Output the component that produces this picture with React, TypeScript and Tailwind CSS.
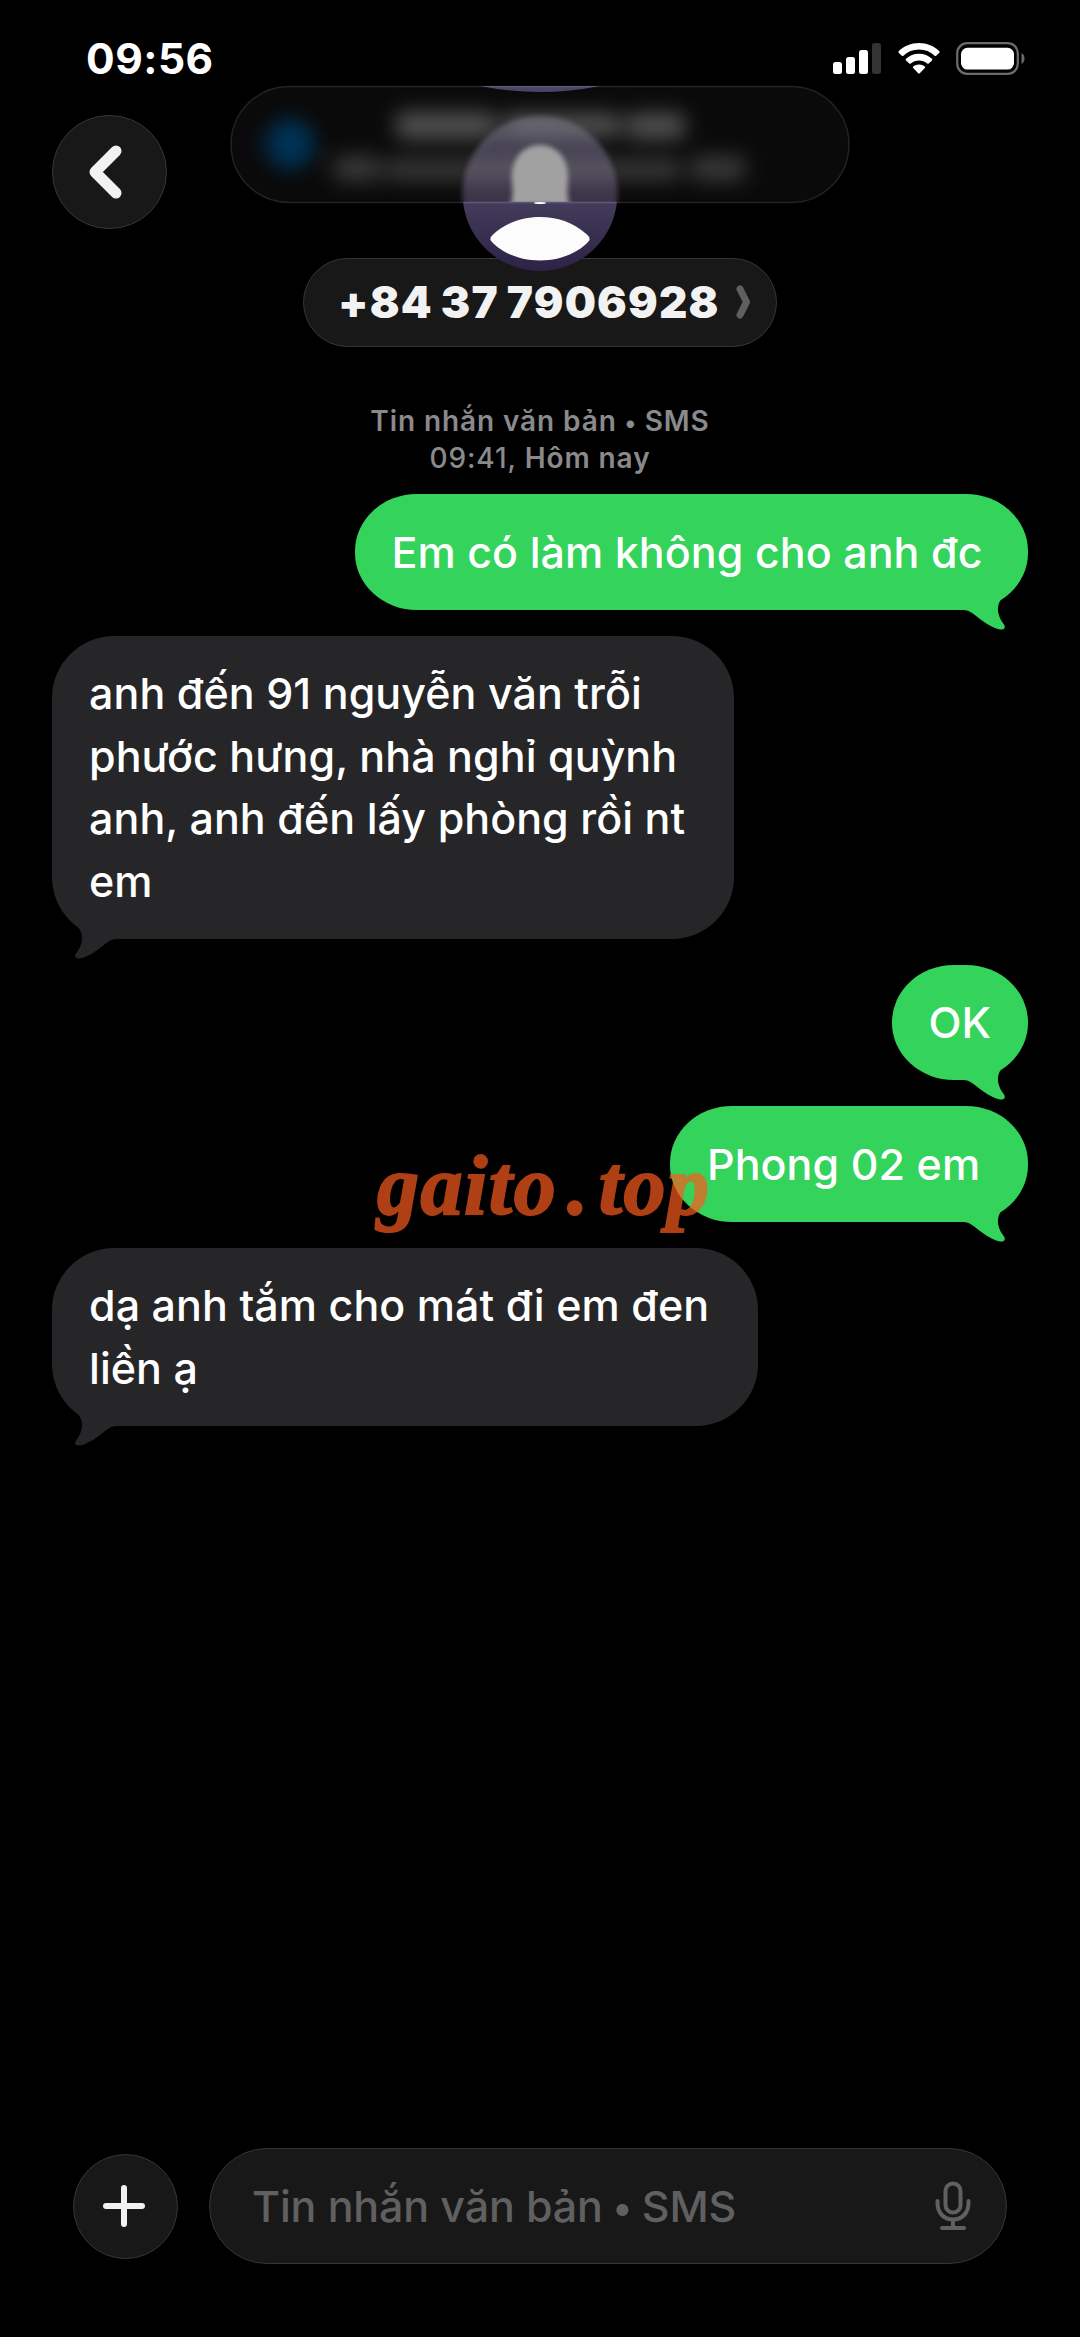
interface Message {
  from: 'me' | 'them'
  lines: string[]
  width: string
}

const messages: Message[] = [
  { from: 'me', lines: ['Em có làm không cho anh đc'], width: 'w-[673.500px]' },
  {
    from: 'them',
    lines: ['anh đến 91 nguyễn văn trỗi', 'phước hưng, nhà nghỉ quỳnh', 'anh, anh đến lấy phòng rồi nt', 'em'],
    width: 'w-[682px]',
  },
  { from: 'me', lines: ['OK'], width: 'w-[136.500px]' },
  { from: 'me', lines: ['Phong 02 em'], width: 'w-[358px]' },
  { from: 'them', lines: ['dạ anh tắm cho mát đi em đen', 'liền ạ'], width: 'w-[706px]' },
]

function StatusBar() {
  return (
    <div className="flex h-[115px] items-start justify-between pl-[86px] pr-[55px] pt-[38px]">
      <span className="text-[42.500px] font-bold leading-[42px] tracking-[0.5px] text-white">09:56</span>
      <div className="flex items-start pt-1">
        <svg width="48" height="32" viewBox="0 0 48 32" className="mr-[17px]">
          <rect x="0" y="20" width="9" height="12" rx="2.5" fill="#fff" />
          <rect x="13" y="15" width="9" height="17" rx="2.5" fill="#fff" />
          <rect x="26" y="8" width="9" height="24" rx="2.5" fill="#fff" />
          <rect x="39" y="1" width="9" height="31" rx="2.5" fill="#333" />
        </svg>
        <svg width="42" height="32" viewBox="0 0 42 32" className="mr-[16px]">
          <path d="M21 1 C13 1 6 4 .7 9.2 Q0 10 .7 10.8 L3.8 13.8 Q4.6 14.4 5.4 13.8 C9.6 9.8 15 7.6 21 7.6 S32.4 9.8 36.6 13.8 Q37.4 14.4 38.2 13.8 L41.3 10.8 Q42 10 41.3 9.2 C36 4 29 1 21 1Z" fill="#fff" />
          <path d="M21 11.8 C16 11.8 11.4 13.7 8 16.8 Q7.2 17.6 8 18.4 L11.3 21.5 Q12 22 12.8 21.5 C15 19.5 18 18.4 21 18.4 S27 19.5 29.2 21.5 Q30 22 30.7 21.5 L34 18.4 Q34.8 17.6 34 16.8 C30.6 13.7 26 11.8 21 11.8Z" fill="#fff" />
          <path d="M21 22.4 C18.7 22.4 16.7 23.2 15.2 24.4 Q14.4 25.2 15.2 26 L20.2 31.2 Q21 32 21.8 31.2 L26.8 26 Q27.6 25.2 26.8 24.4 C25.3 23.2 23.3 22.4 21 22.4Z" fill="#fff" />
        </svg>
        <svg width="69" height="33" viewBox="0 0 69 33">
          <rect x="1.2" y="1.2" width="60.6" height="30.6" rx="10" fill="none" stroke="#6b6b6b" strokeWidth="2.2" />
          <rect x="5" y="5.8" width="53" height="21.8" rx="6.5" fill="#fff" />
          <path d="M65.5 11 C69.5 13 69.5 20 65.5 22Z" fill="#6b6b6b" />
        </svg>
      </div>
    </div>
  )
}

// Notification pill fading out over the contact avatar
function GlassBanner() {
  return (
    <svg width="620" height="188" viewBox="230 85 620 188" className="absolute left-1/2 top-[85px] -translate-x-1/2">
      <defs>
        <linearGradient id="avatar" x1="0" y1="0" x2="0" y2="1">
          <stop offset="0" stopColor="#5a5475" />
          <stop offset="0.55" stopColor="#433c5a" />
          <stop offset="1" stopColor="#2c2347" />
        </linearGradient>
        <linearGradient id="frosted" x1="0" y1="116" x2="0" y2="203" gradientUnits="userSpaceOnUse">
          <stop offset="0" stopColor="#474355" />
          <stop offset="1" stopColor="#3a3347" />
        </linearGradient>
        <filter id="soft" x="-30%" y="-30%" width="160%" height="160%">
          <feGaussianBlur stdDeviation="2.5" />
        </filter>
        <filter id="haze" x="-20%" y="-50%" width="140%" height="200%">
          <feGaussianBlur stdDeviation="10" />
        </filter>
        <clipPath id="below">
          <rect x="230" y="202" width="620" height="80" />
        </clipPath>
        <clipPath id="pill">
          <rect x="231" y="86" width="618" height="117" rx="58" />
        </clipPath>
      </defs>
      <g clipPath="url(#below)">
        <circle cx="540" cy="193.5" r="77.5" fill="url(#avatar)" />
        <path d="M490.5 240 Q490 237 493 234.5 C507 222 523 217 540 217 S573 222 587 234.5 Q590 237 589.5 240 C584 248 566 260.5 540 260.5 S496 248 490.5 240Z" fill="#fcfcfc" />
      </g>
      <rect x="231" y="86.5" width="618" height="116" rx="58" fill="#0a0a0a" />
      <g clipPath="url(#pill)">
        <circle cx="540" cy="193.5" r="77.5" fill="url(#frosted)" filter="url(#soft)" />
        <path d="M480 86 L600 86 Q540 98 480 86Z" fill="#4b4566" />
        <g filter="url(#haze)">
          <circle cx="290" cy="144" r="25" fill="#063255" />
          <g fill="#8a8a8a" fillOpacity="0.55">
            <rect x="395" y="112" width="102" height="27" rx="10" />
            <rect x="502" y="113" width="120" height="24" rx="10" />
            <rect x="626" y="113" width="60" height="26" rx="10" />
          </g>
          <g fill="#8a8a8a" fillOpacity="0.36">
            <rect x="333" y="156" width="48" height="25" rx="9" />
            <rect x="384" y="159" width="298" height="21" rx="9" />
            <rect x="690" y="156" width="56" height="25" rx="9" />
          </g>
        </g>
        <path d="M510 206 Q514 196 512 182 C510 158 524 145 540 145 S570 158 568 182 Q566 196 570 206Z" fill="#a1a1a1" filter="url(#soft)" />
      </g>
      <rect x="231" y="86.5" width="618" height="116" rx="58" fill="none" stroke="#ffffff" strokeOpacity="0.12" strokeWidth="1.5" />
      <path d="M464 202.5 H616" stroke="#5c5577" strokeWidth="1.5" />
      <ellipse cx="540" cy="203" rx="6" ry="1" fill="#fff" />
    </svg>
  )
}

function Header() {
  return (
    <div className="flex h-[232px] flex-col items-stretch">
      <div className="ml-[52px] flex size-[115px] items-center justify-center rounded-full border-[1.5px] border-[#363636] bg-[#181818]">
        <svg width="34" height="54" viewBox="0 0 34 54" className="mr-[9px]">
          <path d="M28 6 L7 27 L28 48" fill="none" stroke="#f2f2f2" strokeWidth="11" strokeLinecap="round" strokeLinejoin="round" />
        </svg>
      </div>
      <div className="mx-auto mt-[28.5px] flex h-[89.5px] w-[474px] items-center rounded-[45px] border-[1.5px] border-[#363636] bg-[#181818] pl-[34px]">
        <span className="w-[398px] whitespace-nowrap text-[44px] font-black leading-[44px] tracking-[1.2px] text-[#f2f2f2] [word-spacing:-2px]">
          +84 37 7906928
        </span>
        <svg width="15" height="34" viewBox="0 0 15 34">
          <path d="M4 4 L10.5 17 L4 30" fill="none" stroke="#5f5f5f" strokeWidth="7" strokeLinecap="round" strokeLinejoin="round" />
        </svg>
      </div>
    </div>
  )
}

function Tail({ side }: { side: 'me' | 'them' }) {
  return (
    <svg
      width="70"
      height="50"
      viewBox="0 0 70 50"
      className={side === 'me' ? 'absolute -bottom-5 right-0 text-[#34d35b]' : 'absolute -bottom-5 left-0 -scale-x-100 text-[#262628]'}
    >
      <path d="M4 30 C12 29.5 15 34 24 40.5 C31 45.5 37 48.5 42 49.5 C46 50 48 48 46 44.5 C40 37 38 28 42 21 C45 16 49 14 53 10 L30 6Z" fill="currentColor" />
    </svg>
  )
}

function Bubble({ message }: { message: Message }) {
  const mine = message.from === 'me'
  const shape = message.lines.length === 1 ? 'rounded-[62px/57px]' : 'rounded-[62px]'
  return (
    <div
      className={`relative whitespace-nowrap py-[26.5px] pl-[37px] text-[43px] font-medium leading-[62.5px] tracking-[0.05px] text-white ${message.width} ${shape} ${mine ? 'self-end bg-[#34d35b]' : 'self-start bg-[#262628]'}`}
    >
      {message.lines.map((line) => (
        <p key={line}>{line}</p>
      ))}
      <Tail side={message.from} />
    </div>
  )
}

function Composer() {
  return (
    <div className="flex items-center gap-[31px] pl-[73px]">
      <div className="flex size-[105px] items-center justify-center rounded-full border-[1.5px] border-[#363636] bg-[#181818]">
        <svg width="42" height="42" viewBox="0 0 42 42" className="mr-1">
          <path d="M21 3 V39 M3 21 H39" stroke="#f2f2f2" strokeWidth="6" strokeLinecap="round" />
        </svg>
      </div>
      <div className="flex h-[116px] w-[798px] items-center justify-between rounded-[58px] border-[1.5px] border-[#363636] bg-[#181818] pl-[42px] pr-[35px]">
        <span className="whitespace-nowrap text-[43px] font-medium tracking-[-0.15px] text-[#606060]">
          Tin nhắn văn bản<span className="inline-block w-[39px] text-center align-[1px] text-[38px] leading-none">•</span>SMS
        </span>
        <svg width="36" height="50" viewBox="0 0 36 50" fill="none" stroke="#606060" strokeWidth="4" strokeLinecap="round">
          <rect x="10.5" y="2.5" width="15" height="29" rx="7.5" />
          <path d="M2.5 20 V22 C2.5 32 9 38.5 18 38.5 S33.5 32 33.5 22 V20 M18 38.5 V46 M7 47 H29" />
        </svg>
      </div>
    </div>
  )
}

export default function App() {
  return (
    <div className="relative flex h-[2337px] w-[1080px] flex-col overflow-hidden bg-black font-['Inter','Liberation_Sans',sans-serif]">
      <StatusBar />
      <Header />
      <div className="mt-[56px] flex h-[91px] flex-col items-center text-[28px] font-semibold leading-[36.5px] tracking-[0.9px] text-[#8a8a8d]">
        <p>
          Tin nhắn văn bản<span className="inline-block w-[28px] text-center text-[24px] leading-none">•</span>SMS
        </p>
        <p>
          <span className="font-medium">09:41,</span> Hôm nay
        </p>
      </div>
      <div className="flex flex-col gap-[26px] px-[52px]">
        {messages.map((message) => (
          <Bubble key={message.lines[0]} message={message} />
        ))}
      </div>
      <div className="mb-[73px] mt-auto">
        <Composer />
      </div>
      <GlassBanner />
      {/* Site watermark laid over the thread */}
      <p className="absolute left-[377px] top-[1136px] whitespace-nowrap font-['Liberation_Serif',serif] text-[84px] font-bold italic leading-[100px] tracking-[1.5px] text-[#fa5b1e] opacity-70 [-webkit-text-stroke:2px_#fa5b1e]">
        gaito<span className="ml-[10px] mr-[9px]">.</span>top
      </p>
    </div>
  )
}
